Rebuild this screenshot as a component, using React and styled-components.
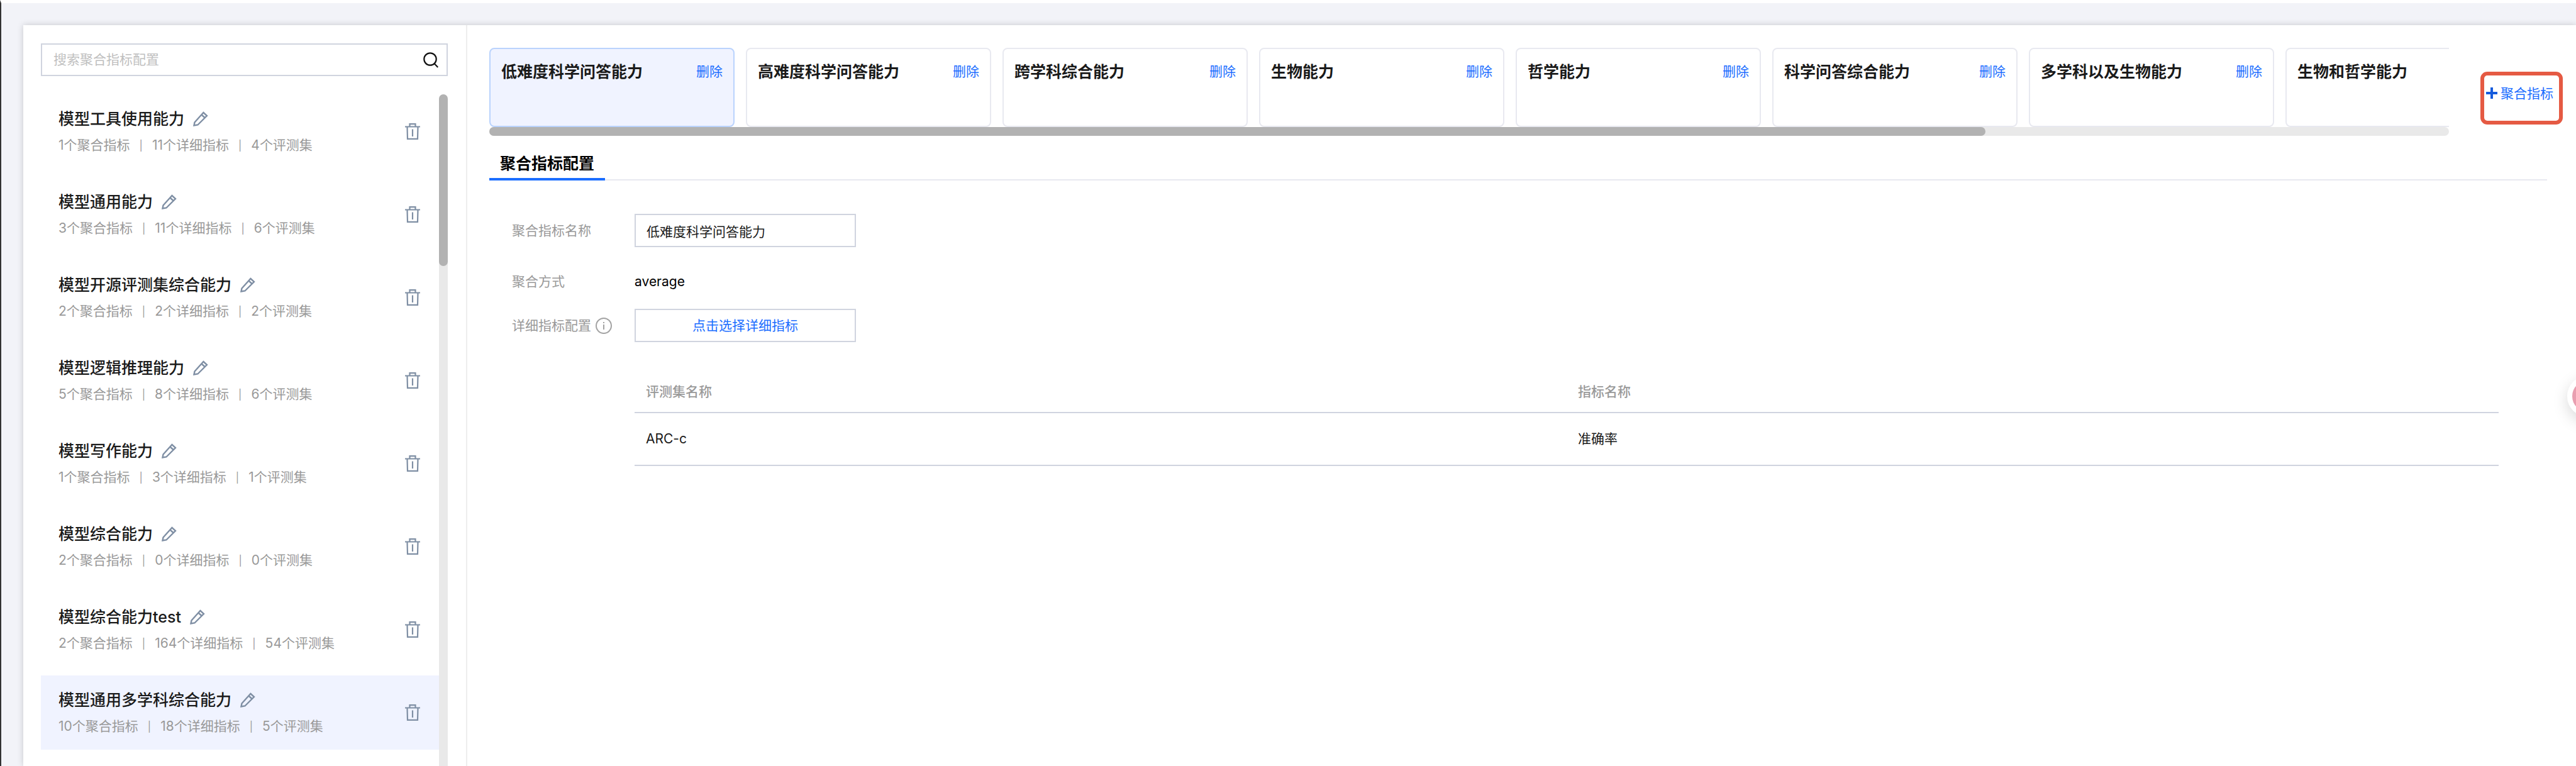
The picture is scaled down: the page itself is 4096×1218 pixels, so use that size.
import React, { useState } from 'react';
import styled, { createGlobalStyle, css } from 'styled-components';

const GlobalStyle = createGlobalStyle`
  * {
    box-sizing: border-box;
  }

  body {
    margin: 0;
    overflow: hidden;
    background: #f2f3f8;
    color: #1a1a1a;
    font: 21px/28px Inter, 'Noto Sans CJK SC', sans-serif;
  }

  button,
  input {
    font: inherit;
    color: inherit;
  }
`;

const Page = styled.div`
  display: flex;
  height: 100vh;
  padding: 35px 0 0 35px;
  border-top: 5px solid #fff;
  border-left: 2px solid #333;
`;

const Panel = styled.div`
  display: flex;
  flex: 1;
  min-width: 0;
  background: #fff;
  box-shadow: 0 0 10px rgba(0, 0, 0, 0.18);
`;

const Sidebar = styled.aside`
  display: flex;
  flex-direction: column;
  flex: 0 0 706px;
  padding: 29px 29px 0 28px;
  border-right: 2px solid #eee;
`;

const SearchBox = styled.label`
  display: flex;
  align-items: center;
  flex: none;
  height: 52px;
  padding: 0 13px 0 18px;
  border: 2px solid #d0d4df;
`;

const SearchInput = styled.input`
  flex: 1;
  min-width: 0;
  padding: 0;
  border: 0;
  outline: 0;
  background: none;

  &::placeholder {
    color: #bfbfbf;
    opacity: 1;
  }
`;

const ListArea = styled.div`
  display: flex;
  flex: 1;
  min-height: 0;
  margin-top: 29px;
`;

const List = styled.ul`
  flex: 1;
  min-width: 0;
  margin: 0;
  padding: 0;
  overflow: hidden;
  list-style: none;
`;

const VerticalTrack = styled.div`
  flex: 0 0 14px;
  border-radius: 7px 7px 0 0;
  background: #e9e9e9;
`;

const VerticalThumb = styled.div`
  height: 273px;
  border-radius: 7px;
  background: #b2b2b2;
`;

const Item = styled.li`
  display: flex;
  align-items: center;
  justify-content: space-between;
  margin-bottom: 14px;
  padding: 23px 30px 23px 28px;
  background: ${(props) => (props.$active ? '#f0f3ff' : 'transparent')};
`;

const ItemTitle = styled.div`
  display: flex;
  align-items: center;
  gap: 14px;
  margin-bottom: 12px;
  font-size: 25px;
  font-weight: 500;
  line-height: 32px;
`;

const ItemMeta = styled.div`
  display: flex;
  gap: 15px;
  color: #999;
`;

const Separator = styled.span`
  font-size: 16px;
`;

const IconButton = styled.button`
  display: flex;
  padding: 0;
  border: 0;
  background: none;
  color: #7f8fa4;
  cursor: pointer;
`;

const Main = styled.main`
  flex: 1;
  min-width: 0;
  padding: 36px 21px 0 35px;
`;

const CardBar = styled.div`
  display: flex;
  align-items: flex-start;
`;

const CardScroller = styled.div`
  flex: 1;
  min-width: 0;
`;

const Cards = styled.div`
  display: flex;
  gap: 18px;
  overflow: hidden;
`;

const Card = styled.section`
  display: flex;
  align-items: flex-start;
  justify-content: space-between;
  flex: 0 0 390px;
  height: 126px;
  padding: 20px 17px;
  border: 2px solid #e8e9f0;
  border-radius: 8px;

  ${(props) =>
    props.$active &&
    css`
      border-color: #bad3fd;
      background: #f0f3ff;
    `}
`;

const CardTitle = styled.h3`
  margin: 0;
  font-size: 25px;
  font-weight: 600;
  line-height: 32px;
`;

const LinkButton = styled.button`
  padding: 0;
  border: 0;
  background: none;
  color: #1a6dff;
  line-height: 32px;
  cursor: pointer;
`;

const HorizontalTrack = styled.div`
  height: 14px;
  border-radius: 7px;
  background: #e9e9e9;
`;

const HorizontalThumb = styled.div`
  width: 76.35%;
  height: 14px;
  border-radius: 7px;
  background: #b2b2b2;
`;

const AddButton = styled.button`
  display: flex;
  flex: 0 0 131px;
  gap: 5px;
  height: 84px;
  margin: 38px 0 0 50px;
  padding: 15px 3px;
  border: 6px solid #e55a43;
  border-radius: 11px;
  background: none;
  color: #1a6dff;
  white-space: nowrap;
  cursor: pointer;
`;

const PlusIcon = styled.svg`
  flex: none;
  margin-top: 4px;
`;

const Tabs = styled.div`
  display: flex;
  margin: 24px 25px 0 0;
  box-shadow: inset 0 -2px #e8e9f0;
`;

const Tab = styled.button`
  padding: 4px 17px 7px;
  border: 0;
  border-bottom: 4px solid #1a6dff;
  background: none;
  color: #000;
  font-size: 25px;
  font-weight: 600;
  line-height: 32px;
`;

const Form = styled.form`
  padding: 53px 102px 0 36px;
`;

const Field = styled.div`
  display: flex;
  align-items: center;
  min-height: 53px;
  margin-bottom: ${(props) => props.$gap}px;
`;

const FieldLabel = styled.label`
  display: flex;
  align-items: center;
  gap: 7px;
  flex: 0 0 195px;
  color: #999;
`;

const TextInput = styled.input`
  width: 352px;
  height: 53px;
  padding: 0 17px;
  border: 2px solid #d0d4df;
  background: #fff;
`;

const FieldValue = styled.output`
  color: #000;
`;

const SelectButton = styled.button`
  width: 352px;
  height: 53px;
  padding: 0;
  border: 2px solid #d0d4df;
  background: #fff;
  color: #1a6dff;
  cursor: pointer;
`;

const Table = styled.table`
  width: calc(100% - 195px);
  margin: 44px 0 0 195px;
  border-collapse: collapse;
  table-layout: fixed;

  th,
  td {
    border-bottom: 2px solid #d0d4df;
    text-align: left;
  }

  th {
    padding: 21px 18px 18px;
    color: #999;
    font-weight: 500;
  }

  td {
    padding: 27px 18px;
  }
`;

const FloatingBall = styled.button`
  position: fixed;
  top: 597px;
  right: -52px;
  width: 66px;
  height: 66px;
  padding: 0;
  border: 8px solid #fff;
  border-radius: 50%;
  background: #e89fb0;
  box-shadow: 0 8px 24px rgba(0, 0, 0, 0.15);
`;

const SearchIcon = () => (
  <svg width="24" height="25" viewBox="0 0 24 25" fill="none" stroke="#111" strokeWidth="2.2">
    <circle cx="11" cy="11" r="9.7" />
    <path d="M17.500 18L23.300 24" />
  </svg>
);

const EditIcon = () => (
  <svg width="24" height="24" viewBox="0 0 24 24" fill="none" stroke="currentColor" strokeWidth="2.4">
    <path d="M1.500 22.500L2.500 17.500L16.500 2L22 7L7.500 21.500Z" />
    <path d="M13.500 5.500L18.500 10" />
  </svg>
);

const TrashIcon = () => (
  <svg width="24" height="26" viewBox="0 0 24 26" fill="none" stroke="currentColor" strokeWidth="2.2">
    <path d="M0 5.500H24M7.500 5V1.100H16.500V5M3.500 6L4 24.900H20L20.500 6M12 9.500V21" />
  </svg>
);

const InfoIcon = () => (
  <svg width="26" height="26" viewBox="0 0 26 26" fill="none" stroke="#a3a3a3" strokeWidth="2">
    <circle cx="13" cy="13" r="12" />
    <path d="M13 11V19M13 7V9" />
  </svg>
);

const configs = [
  { name: '模型工具使用能力', groups: 1, details: 11, sets: 4 },
  { name: '模型通用能力', groups: 3, details: 11, sets: 6 },
  { name: '模型开源评测集综合能力', groups: 2, details: 2, sets: 2 },
  { name: '模型逻辑推理能力', groups: 5, details: 8, sets: 6 },
  { name: '模型写作能力', groups: 1, details: 3, sets: 1 },
  { name: '模型综合能力', groups: 2, details: 0, sets: 0 },
  { name: '模型综合能力test', groups: 2, details: 164, sets: 54 },
  { name: '模型通用多学科综合能力', groups: 10, details: 18, sets: 5 },
];

const metrics = [
  { name: '低难度科学问答能力', removable: true },
  { name: '高难度科学问答能力', removable: true },
  { name: '跨学科综合能力', removable: true },
  { name: '生物能力', removable: true },
  { name: '哲学能力', removable: true },
  { name: '科学问答综合能力', removable: true },
  { name: '多学科以及生物能力', removable: true },
  { name: '生物和哲学能力', removable: false },
];

const ConfigItem = ({ config, active }) => (
  <Item $active={active}>
    <div>
      <ItemTitle>
        {config.name}
        <IconButton type="button" aria-label="编辑">
          <EditIcon />
        </IconButton>
      </ItemTitle>
      <ItemMeta>
        <span>{config.groups}个聚合指标</span>
        <Separator>|</Separator>
        <span>{config.details}个详细指标</span>
        <Separator>|</Separator>
        <span>{config.sets}个评测集</span>
      </ItemMeta>
    </div>
    <IconButton type="button" aria-label="删除">
      <TrashIcon />
    </IconButton>
  </Item>
);

const App = () => {
  const [name, setName] = useState(metrics[0].name);

  return (
    <Page>
      <GlobalStyle />
      <Panel>
        <Sidebar>
          <SearchBox>
            <SearchInput type="text" placeholder="搜索聚合指标配置" />
            <SearchIcon />
          </SearchBox>
          <ListArea>
            <List>
              {configs.map((config, i) => (
                <ConfigItem key={config.name} config={config} active={i === 7} />
              ))}
            </List>
            <VerticalTrack>
              <VerticalThumb />
            </VerticalTrack>
          </ListArea>
        </Sidebar>
        <Main>
          <CardBar>
            <CardScroller>
              <Cards>
                {metrics.map((metric, i) => (
                  <Card key={metric.name} $active={i === 0}>
                    <CardTitle>{metric.name}</CardTitle>
                    {metric.removable && <LinkButton type="button">删除</LinkButton>}
                  </Card>
                ))}
              </Cards>
              <HorizontalTrack>
                <HorizontalThumb />
              </HorizontalTrack>
            </CardScroller>
            <AddButton type="button">
              <PlusIcon width="18" height="18" viewBox="0 0 18 18" stroke="#165bdc" strokeWidth="4">
                <path d="M9 0V18M0 9H18" />
              </PlusIcon>
              聚合指标
            </AddButton>
          </CardBar>
          <Tabs role="tablist">
            <Tab type="button" role="tab" aria-selected="true">
              聚合指标配置
            </Tab>
          </Tabs>
          <Form>
            <Field $gap={28}>
              <FieldLabel htmlFor="metric-name">聚合指标名称</FieldLabel>
              <TextInput id="metric-name" value={name} onChange={(e) => setName(e.target.value)} />
            </Field>
            <Field $gap={17}>
              <FieldLabel htmlFor="metric-mode">聚合方式</FieldLabel>
              <FieldValue id="metric-mode">average</FieldValue>
            </Field>
            <Field $gap={0}>
              <FieldLabel htmlFor="metric-details">
                详细指标配置
                <InfoIcon />
              </FieldLabel>
              <SelectButton id="metric-details" type="button">
                点击选择详细指标
              </SelectButton>
            </Field>
            <Table>
              <thead>
                <tr>
                  <th>评测集名称</th>
                  <th>指标名称</th>
                </tr>
              </thead>
              <tbody>
                <tr>
                  <td>ARC-c</td>
                  <td>准确率</td>
                </tr>
              </tbody>
            </Table>
          </Form>
        </Main>
      </Panel>
      <FloatingBall type="button" aria-label="助手" />
    </Page>
  );
};

export default App;
